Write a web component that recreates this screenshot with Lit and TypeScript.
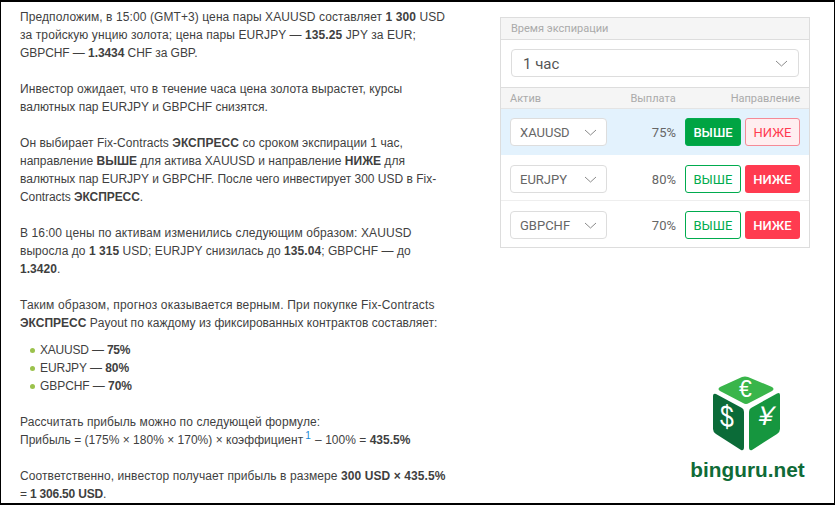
import { LitElement, html, css } from "lit";
import { customElement } from "lit/decorators.js";

const chevron = html`<svg class="chev" width="13" height="7" viewBox="0 0 13 7"><path d="M1 1 L6.5 6 L12 1" fill="none" stroke="#8a8a8a" stroke-width="1"/></svg>`;

const rows = [
  { a: "XAUUSD", p: "75%", active: true, up: true },
  { a: "EURJPY", p: "80%", active: false, up: false },
  { a: "GBPCHF", p: "70%", active: false, up: false },
];

@customElement("app-root")
export class AppRoot extends LitElement {
  static styles = css`
    :host { display: block; width: 835px; height: 505px; box-sizing: border-box; overflow: hidden; background: #fff;
      border: 1px solid #000; border-width: 2px 1px 2px 1px; }
    .page { display: flex; height: 501px; overflow: hidden; }
    .text { width: 428px; margin-left: 19px; flex: none; font: 12px/18px "Liberation Sans", Arial, sans-serif; color: #3f3f3f; padding-top: 6px; letter-spacing: 0.05px; }
    .tn3 { letter-spacing: -0.2px; }
    .tn2 { letter-spacing: -0.07px; }
    .tn1 { letter-spacing: -0.01px; }
    .t0 { letter-spacing: 0.015px; }
    .t1 { letter-spacing: 0.09px; }
    .t2 { letter-spacing: 0.11px; }
    .t3 { letter-spacing: 0.17px; }
    p { margin: 0 0 18px; }
    p.tight { margin-bottom: 9px; }
    ul { list-style: none; margin: 0 0 18px; padding: 0 0 0 20px; }
    li { position: relative; }
    li::before { content: ""; position: absolute; left: -10px; top: 7px; width: 5px; height: 5px; border-radius: 50%; background: #9bc24c; }
    b { font-weight: bold; }
    sup { color: #1a8ad6; font-size: 10px; line-height: 0; vertical-align: 5px; padding: 0 1px 0 2px; }
    .side { margin-left: 52px; width: 310px; flex: none; padding-top: 15px; display: flex; flex-direction: column; }
    .panel { box-sizing: border-box; width: 310px; height: 231px; border: 1px solid #ddd; font-family: Roboto, sans-serif; color: #555; display: flex; flex-direction: column; }
    .head { height: 21px; background: #f5f5f5; border-bottom: 1px solid #ddd; color: #aaa; font-size: 11px; line-height: 22px; padding: 0 10px; flex: none; }
    .time { height: 47px; box-sizing: border-box; padding: 9px 10px 0; flex: none; }
    .select { box-sizing: border-box; border: 1px solid #ddd; border-radius: 4px; background: #fff; display: flex; align-items: center; justify-content: space-between; }
    .select.big { height: 28px; padding: 1px 10px 0 11px; font-size: 15px; color: #555; }
    .select.small { width: 97px; height: 28px; padding: 1px 9px 0 9px; font-size: 13px; color: #666; flex: none; }
    .thead { height: 22px; box-sizing: border-box; flex: none; background: #f5f5f5; border-top: 1px solid #ddd; border-bottom: 1px solid #e4e4e4; color: #aaa; font-size: 11px; display: flex; align-items: center; padding: 0 9px; }
    .thead .pay { margin-left: auto; margin-right: 55px; }
    .row { height: 46px; box-sizing: border-box; flex: none; display: flex; align-items: center; padding: 2px 9px 0; }
    .row.mid { padding-top: 3px; border-bottom: 1px solid #eee; }
    .row.active { background: #e3f2fd; padding-top: 0; }
    .pct { margin-left: auto; font-size: 13px; color: #666; margin-right: 9px; padding-top: 1px; }
    .btn { box-sizing: border-box; height: 28px; padding-top: 1px; border-radius: 3px; font-size: 13px; display: flex; align-items: center; justify-content: center; font-weight: 500; }
    .up { width: 56px; margin-right: 4px; border: 1px solid #00ab4e; color: #00ab4e; background: #fff; font-weight: 400; }
    .up.on { background: #00a443; color: #fff; font-weight: 500; }
    .down { width: 55px; background: #ff3b50; color: #fff; }
    .down.off { background: #ffeef0; border: 1px solid #f58a96; color: #ff3b50; font-weight: 400; }
    .logo { align-self: flex-end; margin: 127px 5px 0 0; width: 115px; display: flex; flex-direction: column; align-items: center; }
    .logo svg { display: block; margin-left: -2px; }
    .brand { font: bold 20.8px/24px "Liberation Sans", Arial, sans-serif; color: #0f6b37; margin-top: 7px; white-space: nowrap; }
  `;

  render() {
    return html`<div class="page">
      <div class="text">
        <p><span class="t1">Предположим, в 15:00 (GMT+3) цена пары XAUUSD составляет <b>1 300</b> USD</span><br><span class="t1">за тройскую унцию золота; цена пары EURJPY — <b>135.25</b> JPY за EUR;</span><br><span class="tn2">GBPCHF — <b>1.3434</b> CHF за GBP.</span></p>
        <p><span class="t1">Инвестор ожидает, что в течение часа цена золота вырастет, курсы</span><br><span class="tn1">валютных пар EURJPY и GBPCHF снизятся.</span></p>
        <p>Он выбирает Fix-Contracts <b>ЭКСПРЕСС</b> со сроком экспирации 1 час,<br><span class="t0">направление <b>ВЫШЕ</b> для актива XAUUSD и направление <b>НИЖЕ</b> для</span><br><span class="tn1">валютных пар EURJPY и GBPCHF. После чего инвестирует 300 USD в Fix-</span><br><span class="tn2">Contracts <b>ЭКСПРЕСС</b>.</span></p>
        <p><span class="t2">В 16:00 цены по активам изменились следующим образом: XAUUSD</span><br><span>выросла до <b>1 315</b> USD; EURJPY снизилась до <b>135.04</b>; GBPCHF — до</span><br><b>1.3420</b>.</p>
        <p class="tight"><span class="t3">Таким образом, прогноз оказывается верным. При покупке Fix-Contracts</span><br><span class="t0"><b>ЭКСПРЕСС</b> Payout по каждому из фиксированных контрактов составляет:</span></p>
        <ul>
          <li class="tn3">XAUUSD — <b>75%</b></li>
          <li class="tn2">EURJPY — <b>80%</b></li>
          <li class="tn2">GBPCHF — <b>70%</b></li>
        </ul>
        <p><span class="t1">Рассчитать прибыль можно по следующей формуле:</span><br><span class="t0">Прибыль = (175% × 180% × 170%) × коэффициент<sup>1</sup> – 100% = <b>435.5%</b></span></p>
        <p><span class="t1">Соответственно, инвестор получает прибыль в размере <b>300 USD × 435.5%</b></span><br><span class="tn3">= <b>1 306.50 USD</b>.</span></p>
      </div>
      <div class="side">
        <div class="panel">
          <div class="head">Время экспирации</div>
          <div class="time"><div class="select big"><span>1 час</span>${chevron}</div></div>
          <div class="thead"><span>Актив</span><span class="pay">Выплата</span><span>Направление</span></div>
          ${rows.map(
            (r, i) => html`<div class="row ${r.active ? "active" : ""} ${i === 1 ? "mid" : ""}">
              <div class="select small"><span>${r.a}</span>${chevron}</div>
              <span class="pct">${r.p}</span>
              <div class="btn up ${r.up ? "on" : ""}">ВЫШЕ</div>
              <div class="btn down ${r.up ? "off" : ""}">НИЖЕ</div>
            </div>`
          )}
        </div>
        <div class="logo">
          <svg width="69" height="76" viewBox="0 0 69 76">
            <path d="M8 12 L30 2 Q33 1 36 2 L60 12 Q63 14 60 16 L37 28 Q34 30 31 28 L8 16 Q5 14 8 12Z" fill="#39b54a"/>
            <path d="M1 21 Q1 18 4 19 L30 33 Q32 34 32 37 L32 72 Q32 76 29 75 L4 59 Q1 57 1 54Z" fill="#0b6b38"/>
            <path d="M37 37 Q37 34 39 33 L65 18.500 Q68 17 68 20 L68 54 Q68 57 65 59 L40 75 Q37 76 37 72Z" fill="#16963f"/>
            <text x="33.500" y="22" text-anchor="middle" font-family="Liberation Sans" font-size="23" fill="#fff">€</text>
            <text transform="translate(15 52) scale(0.8 1) skewY(8)" text-anchor="middle" font-family="Liberation Sans" font-size="31" fill="#fff">$</text>
            <text transform="translate(52 50) skewX(-14)" text-anchor="middle" font-family="Liberation Sans" font-size="27" fill="#fff">¥</text>
          </svg>
          <div class="brand">binguru.net</div>
        </div>
      </div>
    </div>`;
  }
}
